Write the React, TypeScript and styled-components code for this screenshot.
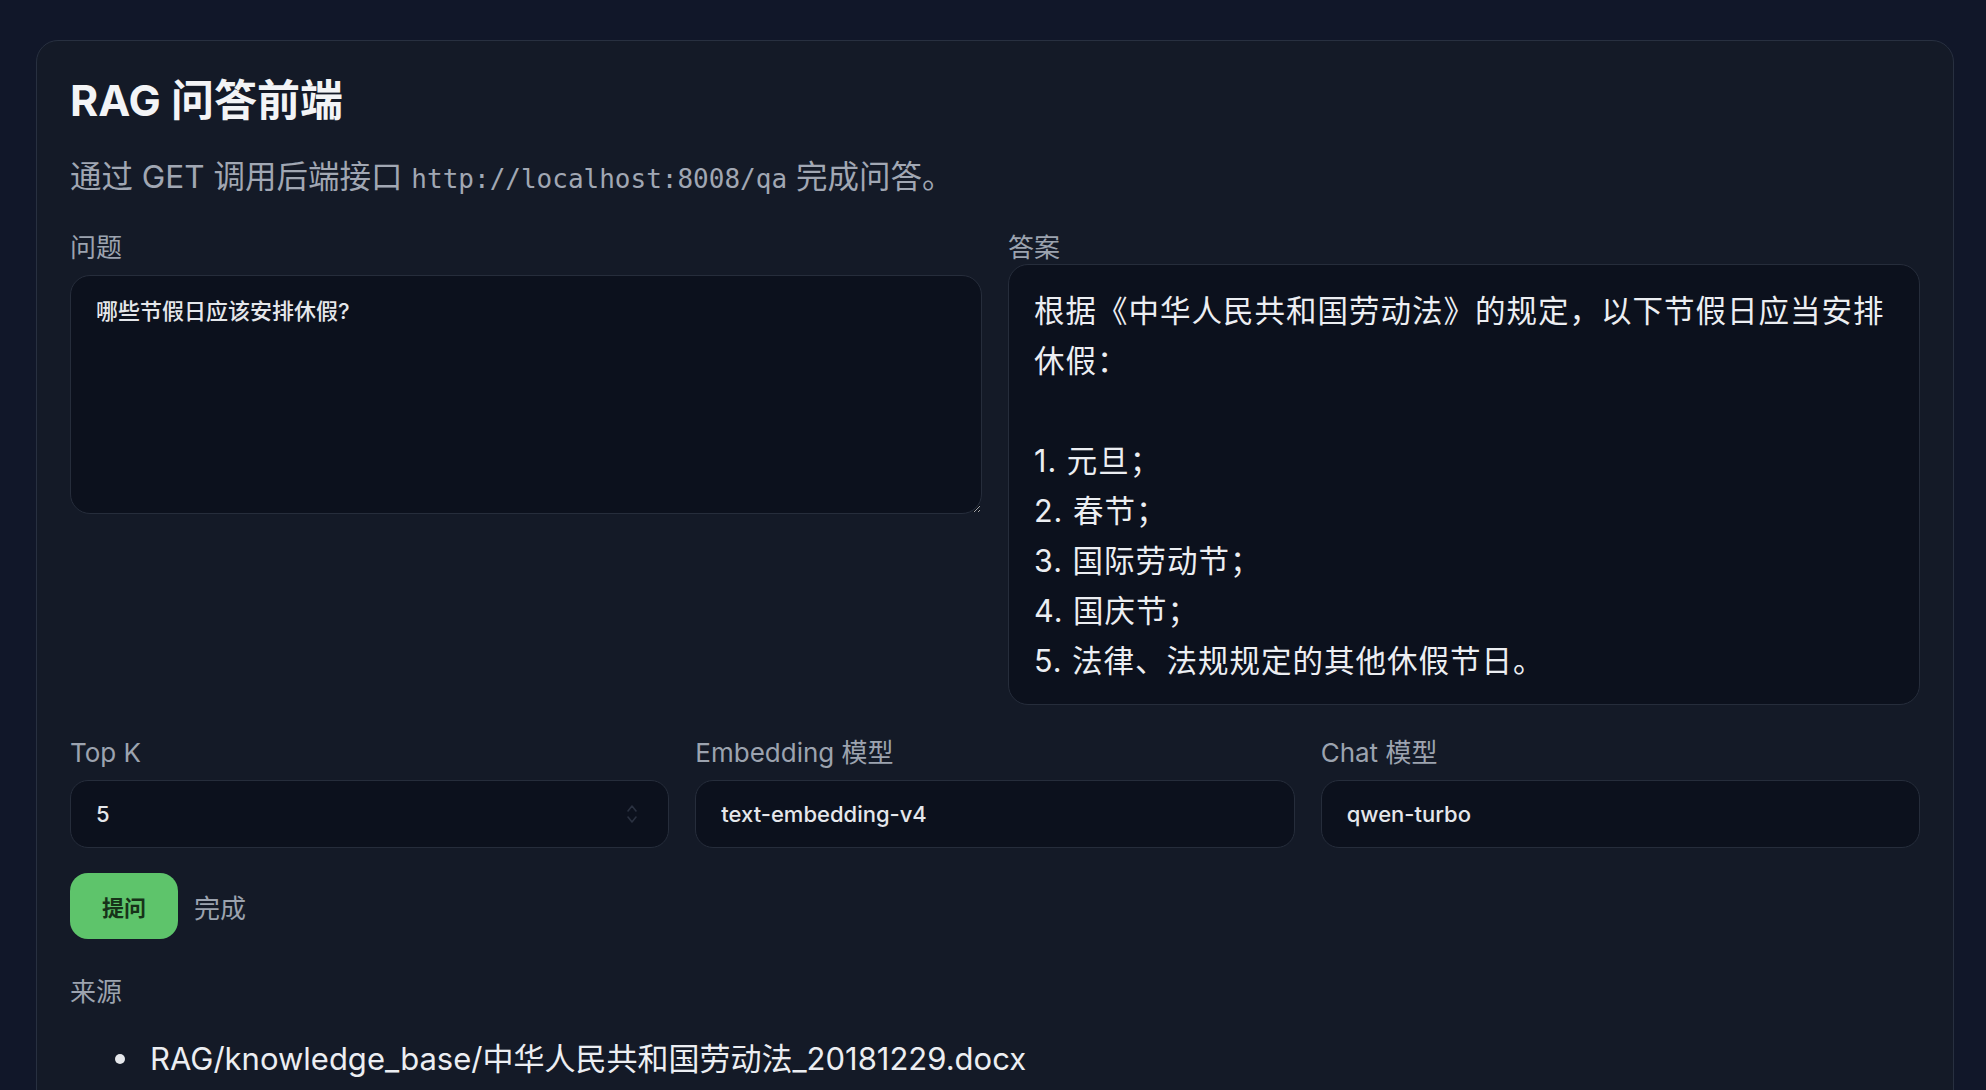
import React from "react";
import styled, { createGlobalStyle } from "styled-components";

const GlobalStyle = createGlobalStyle`
  html, body {
    margin: 0;
    padding: 0;
    background: #111729;
  }
  body {
    font-family: "Inter", "Noto Sans CJK SC", sans-serif;
    color: #e8eaee;
  }
  * { box-sizing: border-box; }
`;

const Page = styled.div`
  padding: 40px 32px 0 36px;
  min-height: 1090px;
`;

const Card = styled.main`
  background: #141a27;
  border: 1px solid #283040;
  border-radius: 22px;
  padding: 34px 33px 40px;
`;

const Title = styled.h1`
  margin: 0;
  font-size: 43px;
  line-height: 50px;
  font-weight: 700;
  color: #f3f4f6;
`;

const Subtitle = styled.p`
  margin: 32px 0 0;
  font-size: 31.5px;
  line-height: 40px;
  color: #a1a7b3;
`;

const Code = styled.code`
  font-family: "DejaVu Sans Mono", "Liberation Mono", monospace;
  font-size: 26px;
`;

const TwoCols = styled.section`
  margin-top: 33px;
  display: grid;
  grid-template-columns: 1fr 1fr;
  column-gap: 26px;
  align-items: start;
`;

const ThreeCols = styled.section`
  margin-top: 32px;
  display: grid;
  grid-template-columns: 1fr 1fr 1fr;
  column-gap: 26px;
`;

const Column = styled.div<{ $gap: number }>`
  display: flex;
  flex-direction: column;
  gap: ${(p) => p.$gap}px;
  min-width: 0;
`;

const Label = styled.label`
  display: block;
  font-size: 26px;
  line-height: 32px;
  color: #9ca3af;
`;

const TextArea = styled.textarea`
  display: block;
  width: 100%;
  height: 239px;
  margin: 0;
  padding: 20px 25px;
  background: #0c111d;
  border: 1px solid #262d3b;
  border-radius: 20px;
  color: #e5e7eb;
  font-family: "Inter", "Noto Sans CJK SC", sans-serif;
  font-size: 22px;
  line-height: 30px;
  font-weight: 500;
  outline: none;
  resize: vertical;
`;

const AnswerBox = styled.div`
  background: #0c111d;
  border: 1px solid #262d3b;
  border-radius: 20px;
  padding: 21px 22px 18px 25px;
  font-size: 30.5px;
  line-height: 50px;
  letter-spacing: 1px;
  color: #eceef2;
  white-space: pre-wrap;
`;

const InputShell = styled.div`
  display: flex;
  align-items: center;
  height: 68px;
  padding: 0 30px 0 25px;
  background: #0c111d;
  border: 1px solid #262d3b;
  border-radius: 18px;
`;

const Input = styled.input`
  flex: 1;
  min-width: 0;
  border: none;
  outline: none;
  background: transparent;
  padding: 0;
  color: #e5e7eb;
  font-family: "Inter", "Noto Sans CJK SC", sans-serif;
  font-size: 22px;
  font-weight: 500;
`;

const Spinner = styled.svg`
  flex: none;
  width: 12px;
  height: 22px;
`;

const Actions = styled.div`
  margin-top: 25px;
  display: flex;
  align-items: center;
  gap: 16px;
`;

const Button = styled.button`
  width: 108px;
  height: 66px;
  border: none;
  border-radius: 18px;
  background: #5ec46b;
  color: #173219;
  font-family: "Inter", "Noto Sans CJK SC", sans-serif;
  font-size: 22px;
  font-weight: 700;
  cursor: pointer;
`;

const Status = styled.span`
  font-size: 26px;
  line-height: 32px;
  color: #9ca3af;
  padding-top: 6px;
`;

const SourcesLabel = styled(Label)`
  margin-top: 37px;
`;

const SourceList = styled.ul`
  list-style: none;
  margin: 28px 0 0;
  padding: 0 0 0 45px;
`;

const SourceItem = styled.li`
  display: flex;
  align-items: center;
  gap: 25px;
  font-size: 31px;
  line-height: 46px;
  color: #eceef2;
`;

const Dot = styled.span`
  width: 10px;
  height: 10px;
  border-radius: 50%;
  background: #e5e7eb;
  flex: none;
`;

const answer = `根据《中华人民共和国劳动法》的规定，以下节假日应当安排休假：

1. 元旦；
2. 春节；
3. 国际劳动节；
4. 国庆节；
5. 法律、法规规定的其他休假节日。`;

export default function App() {
  return (
    <>
      <GlobalStyle />
      <Page>
        <Card>
          <Title>RAG 问答前端</Title>
          <Subtitle>
            通过 GET 调用后端接口 <Code>http://localhost:8008/qa</Code> 完成问答。
          </Subtitle>

          <TwoCols>
            <Column $gap={11}>
              <Label>问题</Label>
              <TextArea defaultValue="哪些节假日应该安排休假?" />
            </Column>
            <Column $gap={0}>
              <Label>答案</Label>
              <AnswerBox>{answer}</AnswerBox>
            </Column>
          </TwoCols>

          <ThreeCols>
            <Column $gap={11}>
              <Label>Top K</Label>
              <InputShell>
                <Input defaultValue="5" />
                <Spinner viewBox="0 0 12 22" fill="none" stroke="#2a3140" strokeWidth="1.6" strokeLinecap="round" strokeLinejoin="round">
                  <path d="M2 8 L6 3 L10 8" />
                  <path d="M2 14 L6 19 L10 14" />
                </Spinner>
              </InputShell>
            </Column>
            <Column $gap={11}>
              <Label>Embedding 模型</Label>
              <InputShell>
                <Input defaultValue="text-embedding-v4" />
              </InputShell>
            </Column>
            <Column $gap={11}>
              <Label>Chat 模型</Label>
              <InputShell>
                <Input defaultValue="qwen-turbo" />
              </InputShell>
            </Column>
          </ThreeCols>

          <Actions>
            <Button>提问</Button>
            <Status>完成</Status>
          </Actions>

          <SourcesLabel>来源</SourcesLabel>
          <SourceList>
            <SourceItem>
              <Dot />
              RAG/knowledge_base/中华人民共和国劳动法_20181229.docx
            </SourceItem>
          </SourceList>
        </Card>
      </Page>
    </>
  );
}
